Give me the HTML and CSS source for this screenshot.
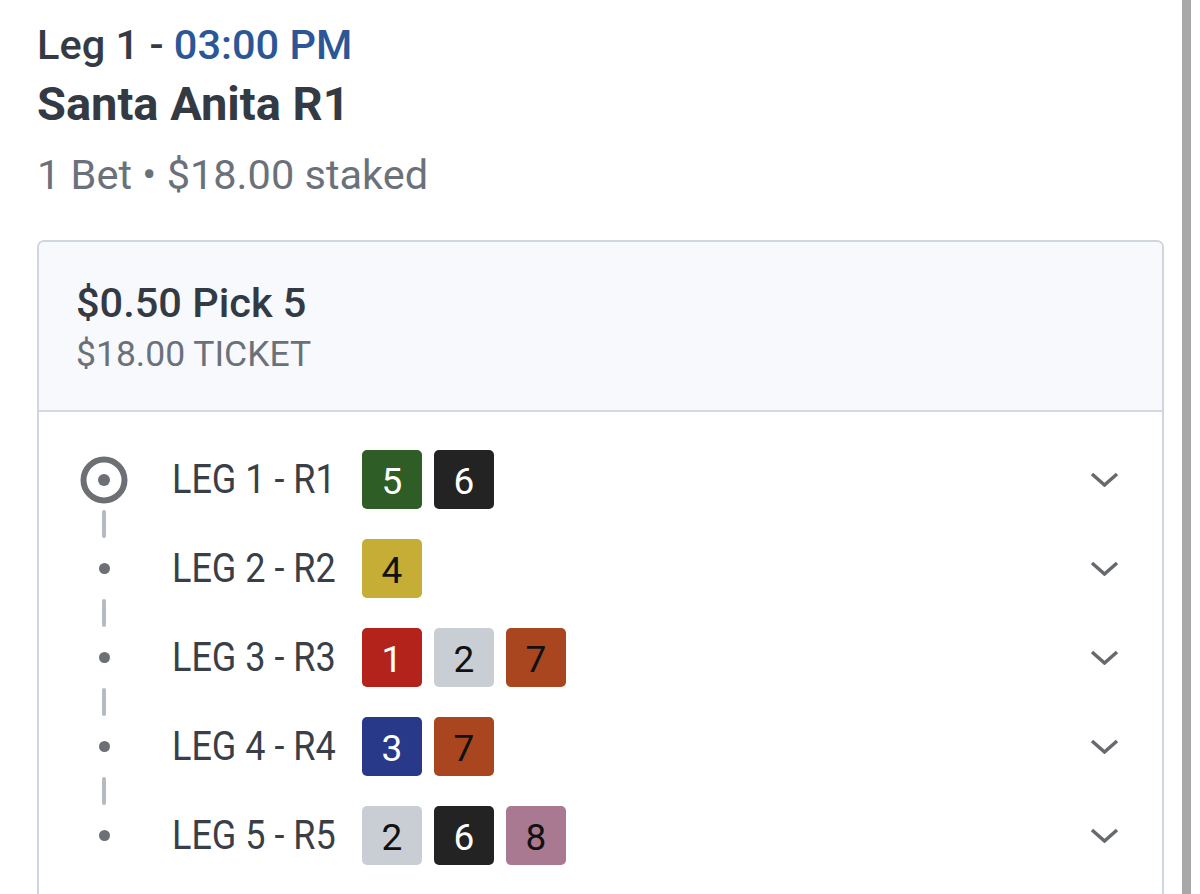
FILE: index.html
```html
<!DOCTYPE html>
<html lang="en">
<head>
<meta charset="utf-8">
<title>Santa Anita R1</title>
<link rel="stylesheet" href="styles.css">
</head>
<body>
<div class="page">
  <main class="main">
    <header class="race-head">
      <div class="leg-time">Leg 1 - <span class="time">03:00 PM</span></div>
      <h1 class="race-name">Santa Anita R1</h1>
      <div class="race-meta">1 Bet • $18.00 staked</div>
    </header>

    <section class="card">
      <div class="card-head">
        <div class="bet-title">$0.50 Pick 5</div>
        <div class="bet-sub">$18.00 TICKET</div>
      </div>
      <div class="legs">
        <div class="leg">
          <div class="marker">
            <svg width="48" height="48" viewBox="0 0 48 48"><circle cx="24" cy="24" r="20.5" fill="none" stroke="#6c6f74" stroke-width="6"/><circle cx="24" cy="24" r="6" fill="#6c6f74"/></svg>
          </div>
          <div class="leg-label"><span>LEG 1 - R1</span></div>
          <div class="badges">
            <span class="badge b-green">5</span>
            <span class="badge b-black">6</span>
          </div>
          <svg class="chev" width="29" height="15" viewBox="0 0 29 15"><path d="M2 2 L14.5 13 L27 2" fill="none" stroke="#66696e" stroke-width="3.5"/></svg>
        </div>
        <div class="connector"><span class="dash"></span></div>
        <div class="leg">
          <div class="marker"><span class="dot"></span></div>
          <div class="leg-label"><span>LEG 2 - R2</span></div>
          <div class="badges">
            <span class="badge b-yellow">4</span>
          </div>
          <svg class="chev" width="29" height="15" viewBox="0 0 29 15"><path d="M2 2 L14.5 13 L27 2" fill="none" stroke="#66696e" stroke-width="3.5"/></svg>
        </div>
        <div class="connector"><span class="dash"></span></div>
        <div class="leg">
          <div class="marker"><span class="dot"></span></div>
          <div class="leg-label"><span>LEG 3 - R3</span></div>
          <div class="badges">
            <span class="badge b-red">1</span>
            <span class="badge b-grey">2</span>
            <span class="badge b-brown">7</span>
          </div>
          <svg class="chev" width="29" height="15" viewBox="0 0 29 15"><path d="M2 2 L14.5 13 L27 2" fill="none" stroke="#66696e" stroke-width="3.5"/></svg>
        </div>
        <div class="connector"><span class="dash"></span></div>
        <div class="leg">
          <div class="marker"><span class="dot"></span></div>
          <div class="leg-label"><span>LEG 4 - R4</span></div>
          <div class="badges">
            <span class="badge b-blue">3</span>
            <span class="badge b-brown">7</span>
          </div>
          <svg class="chev" width="29" height="15" viewBox="0 0 29 15"><path d="M2 2 L14.5 13 L27 2" fill="none" stroke="#66696e" stroke-width="3.5"/></svg>
        </div>
        <div class="connector"><span class="dash"></span></div>
        <div class="leg">
          <div class="marker"><span class="dot"></span></div>
          <div class="leg-label"><span>LEG 5 - R5</span></div>
          <div class="badges">
            <span class="badge b-grey">2</span>
            <span class="badge b-black">6</span>
            <span class="badge b-pink">8</span>
          </div>
          <svg class="chev" width="29" height="15" viewBox="0 0 29 15"><path d="M2 2 L14.5 13 L27 2" fill="none" stroke="#66696e" stroke-width="3.5"/></svg>
        </div>
      </div>
    </section>
  </main>
  <div class="rail"></div>
</div>
</body>
</html>
```
FILE: styles.css
```css
html, body {
  margin: 0;
  padding: 0;
  height: 100%;
  overflow: hidden;
  background: #ffffff;
}
body {
  font-family: Roboto, "Noto Sans", "Liberation Sans", sans-serif;
  color: #343a44;
}
.page {
  display: flex;
  height: 100%;
  padding-right: 9px;
  box-sizing: border-box;
}
.main {
  flex: 1;
  padding: 21px 18px 0 37px;
  min-width: 0;
}
.rail {
  width: 9px;
  background: #a8a8a8;
  flex: none;
}

.leg-time {
  font-size: 41.5px;
  line-height: 48px;
  font-weight: 500;
  color: #353b45;
}
.time {
  color: #2b5797;
}
.race-name {
  margin: 5px 0 0;
  font-size: 47px;
  line-height: 60px;
  font-weight: 700;
  color: #343a44;
}
.race-meta {
  margin-top: 16px;
  font-size: 41.5px;
  line-height: 50px;
  color: #6b717a;
}

.card {
  margin-top: 40px;
  border: 2px solid #cfd6df;
  border-radius: 7px;
  overflow: hidden;
}
.card-head {
  background: #f8f9fc;
  padding: 37px 37px 34px;
  border-bottom: 2px solid #d3d9e1;
}
.bet-title {
  font-size: 41.5px;
  line-height: 48px;
  font-weight: 500;
  color: #343a44;
}
.bet-sub {
  margin-top: 5px;
  font-size: 35.5px;
  line-height: 44px;
  color: #6b717a;
}

.legs {
  padding: 38px 43px 60px 41px;
  display: flex;
  flex-direction: column;
}
.leg {
  display: flex;
  align-items: center;
  height: 59px;
}
.marker {
  width: 48px;
  height: 48px;
  flex: none;
  display: flex;
  align-items: center;
  justify-content: center;
}
.marker svg {
  display: block;
}
.dot {
  width: 11px;
  height: 11px;
  border-radius: 50%;
  background: #6c6f74;
}
.connector {
  width: 48px;
  height: 30px;
  display: flex;
  align-items: center;
  justify-content: center;
}
.dash {
  width: 4px;
  height: 28px;
  border-radius: 2px;
  background: #b6bbc2;
}
.leg-label {
  width: 190px;
  margin-left: 44px;
  flex: none;
  font-size: 40px;
  line-height: 48px;
  color: #3a3f47;
  white-space: nowrap;
}
.leg-label span {
  display: inline-block;
  transform: scaleX(0.9);
  transform-origin: left center;
}
.badges {
  display: flex;
  gap: 12px;
}
.badge {
  width: 60px;
  height: 59px;
  border-radius: 5px;
  display: flex;
  align-items: center;
  justify-content: center;
  font-size: 37px;
  line-height: 1;
  padding-top: 4px;
  box-sizing: border-box;
  color: #111111;
}
.b-green { background: #2e5d25; color: #ffffff; }
.b-black { background: #232323; color: #ffffff; }
.b-yellow { background: #c5ad36; color: #111111; }
.b-red { background: #b3231b; color: #ffffff; }
.b-grey { background: #c9ced4; color: #111111; }
.b-brown { background: #a9461f; color: #111111; }
.b-blue { background: #28398a; color: #ffffff; }
.b-pink { background: #a97891; color: #111111; }
.chev {
  margin-left: auto;
  flex: none;
  display: block;
}
```
